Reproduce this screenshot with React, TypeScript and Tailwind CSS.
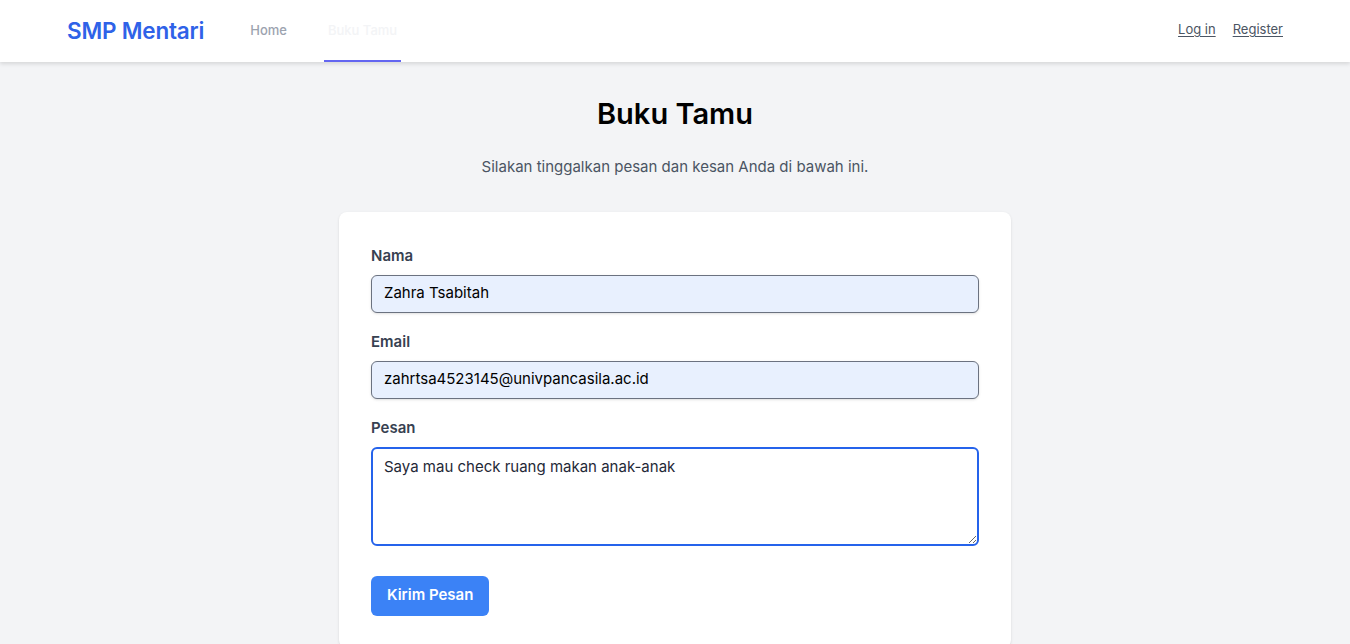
export default function App() {
  return (
    <div className="min-h-[644px] bg-[#f3f4f6]" style={{ fontFamily: 'Inter, "Noto Sans", sans-serif' }}>
      <nav className="relative z-10 h-[62px] bg-white shadow-[0_2px_4px_rgba(0,0,0,0.12)]">
        <div className="mx-auto flex h-full max-w-7xl items-center justify-between px-8">
          <div className="flex h-full items-center">
            <span className="text-[22.5px] font-semibold tracking-[-0.2px] text-[#2f62e8]">SMP Mentari</span>
            <div className="ml-[46px] flex h-full items-center gap-[37px]">
              <a className="text-[13px] font-medium text-[#9ca3af]">Home</a>
              <a className="flex h-full items-center border-b-2 border-[#6366f1] px-[4px] pt-[1px] text-[13px] font-medium text-[#f3f4f6]">
                Buku Tamu
              </a>
            </div>
          </div>
          <div className="-mt-[2px] flex items-center gap-[17px] text-[13px] text-[#4b5563]">
            <a className="underline underline-offset-2">Log in</a>
            <a className="underline underline-offset-2">Register</a>
          </div>
        </div>
      </nav>

      <main className="mx-auto flex max-w-2xl flex-col items-center pt-[34px]">
        <h1 className="text-[29px] font-semibold leading-9 text-black">Buku Tamu</h1>
        <p className="mt-[24px] text-[15px] text-[#4b5563]">Silakan tinggalkan pesan dan kesan Anda di bawah ini.</p>

        <div className="mt-[33px] w-full rounded-lg bg-white px-8 pb-8 pt-[34px] shadow-sm">
          <div className="flex flex-col gap-[19px]">
            <div>
              <label className="block text-[15px] font-semibold leading-5 text-[#374151]">Nama</label>
              <div className="mt-[9px] flex h-[38px] items-center rounded-md border border-[#6b7280] bg-[#e8f0fe] px-3 text-[15px] text-black shadow-sm">
                Zahra Tsabitah
              </div>
            </div>
            <div>
              <label className="block text-[15px] font-semibold leading-5 text-[#374151]">Email</label>
              <div className="mt-[9px] flex h-[38px] items-center rounded-md border border-[#6b7280] bg-[#e8f0fe] px-3 text-[15px] text-black shadow-sm">
                zahrtsa4523145@univpancasila.ac.id
              </div>
            </div>
            <div>
              <label className="block text-[15px] font-semibold leading-5 text-[#374151]">Pesan</label>
              <textarea
                className="mt-[9px] block h-[99px] w-full resize-y rounded-md border-2 border-[#2563eb] bg-white px-[11px] py-[7px] text-[15px] text-[#1f2937] outline-none"
                defaultValue="Saya mau check ruang makan anak-anak"
                spellCheck={false}
              />
            </div>
          </div>
          <button className="mt-[30px] h-[40px] rounded-md bg-[#3b82f6] px-4 text-[15px] font-semibold text-white">
            Kirim Pesan
          </button>
        </div>
      </main>
    </div>
  )
}
